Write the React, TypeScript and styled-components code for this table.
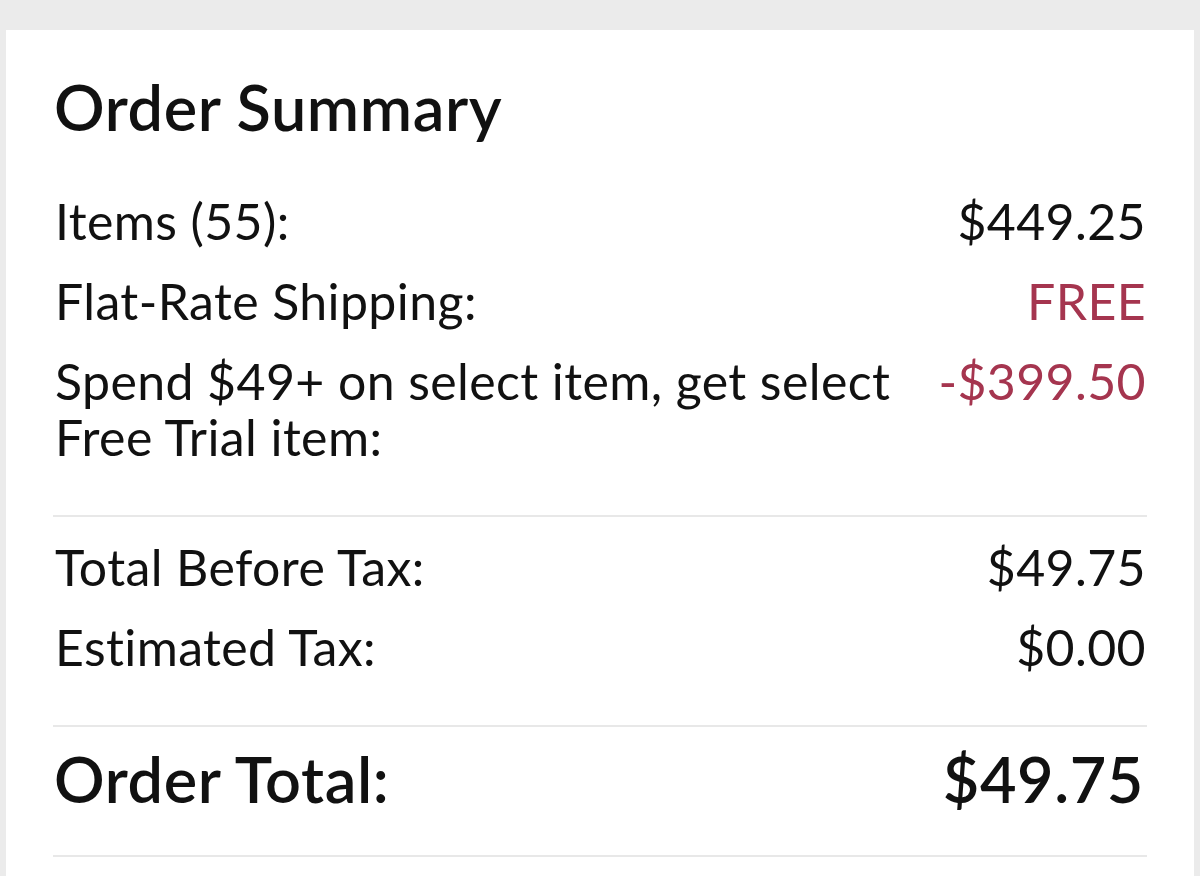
import styled, { createGlobalStyle } from 'styled-components';

const GlobalStyle = createGlobalStyle`
	html, body {
		margin: 0;
		padding: 0;
		background: #ebebeb;
	}
	body {
		font-family: 'Lato', 'Liberation Sans', sans-serif;
		color: #111111;
	}
`;

interface LineProps {
	label: string;
	value: string;
	accent?: boolean;
}

const Line = ({ label, value, accent = false }: LineProps) => (
	<Row>
		<Label>{label}</Label>
		<Value accent={accent}>{value}</Value>
	</Row>
);

const App = () => {
	return (
		<>
			<GlobalStyle />
			<Card>
				<Title>Order Summary</Title>
				<Group>
					<Line label="Items (55):" value="$449.25" />
					<Line label="Flat-Rate Shipping:" value="FREE" accent />
					<Line label="Spend $49+ on select item, get select Free Trial item:" value="-$399.50" accent />
				</Group>
				<Divider />
				<Group>
					<Line label="Total Before Tax:" value="$49.75" />
					<Line label="Estimated Tax:" value="$0.00" />
				</Group>
				<Divider />
				<TotalRow>
					<span>Order Total:</span>
					<span>$49.75</span>
				</TotalRow>
				<Divider />
			</Card>
		</>
	);
};

const Card = styled.div`
	margin: 30px 6px 0;
	padding: 40px 47px 0 47px;
	min-height: calc(100vh - 30px);
	box-sizing: border-box;
	background: #ffffff;
`;

const Title = styled.h1`
	margin: 0 0 49px;
	padding-left: 1px;
	font-size: 63px;
	line-height: 74px;
	font-weight: 600;
	letter-spacing: 0.6px;
	color: #111111;
`;

const Group = styled.section`
	display: flex;
	flex-direction: column;
	gap: 24px;
`;

const Row = styled.div`
	display: flex;
	justify-content: space-between;
	align-items: flex-start;
	gap: 40px;
	padding: 0 1px 0 2px;
	font-size: 50px;
	line-height: 56px;
	font-weight: 400;
	letter-spacing: 0.4px;
`;

const Label = styled.span`
	flex: 0 1 860px;
`;

const Value = styled.span.withConfig({
	shouldForwardProp: (prop) => prop !== 'accent',
})<{ accent: boolean }>`
	white-space: nowrap;
	color: ${({ accent }) => (accent ? '#a5354f' : '#111111')};
`;

const Divider = styled.hr`
	border: none;
	height: 2px;
	margin: 50px 0 22px;
	background: #e8e8e8;
`;

const TotalRow = styled.div`
	display: flex;
	justify-content: space-between;
	padding: 0 3px 0 1px;
	margin-top: -7px;
	margin-bottom: -11px;
	font-size: 63px;
	line-height: 74px;
	font-weight: 600;
	letter-spacing: 0.6px;
`;

export default App;
